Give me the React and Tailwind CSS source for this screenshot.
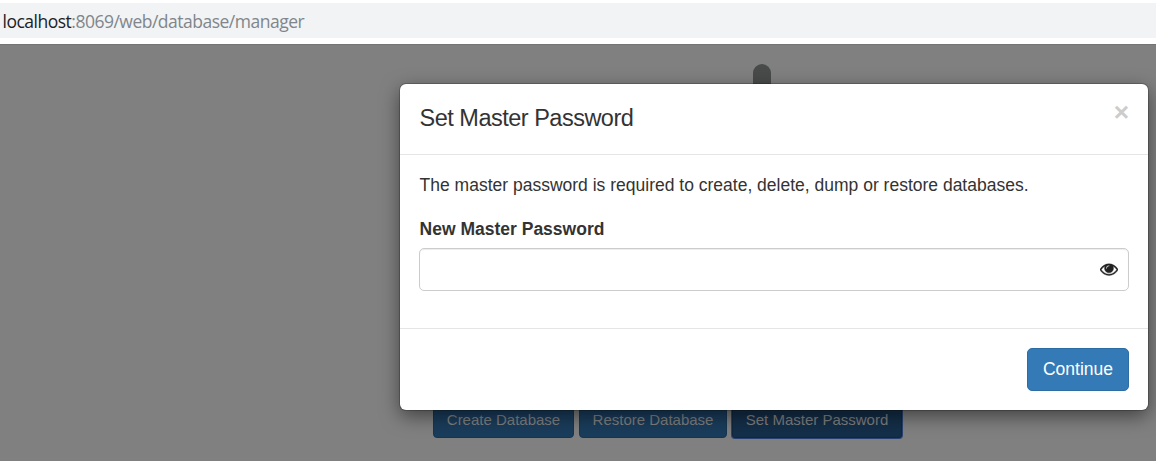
import React from "react";

function AddressBar() {
  return (
    <div className="h-[44px] bg-white pt-[3px]">
      <div className="flex h-[35px] items-center bg-[#f1f3f4] pt-[2px] pl-[2.5px] font-['Open_Sans',sans-serif] text-[17.5px] tracking-[-0.5px] text-[#80868b]">
        <span className="text-[#202124]">localhost</span>
        <span>:8069/web/database/manager</span>
      </div>
    </div>
  );
}

function EyeIcon() {
  return (
    <svg viewBox="0 0 1792 1792" className="h-[18px] w-[18px]" fill="#222" stroke="#222" strokeWidth="40">
      <path d="M1664 960q-152-236-381-353 61 104 61 225 0 185-131.5 316.5t-316.5 131.5-316.5-131.5-131.5-316.5q0-121 61-225-229 117-381 353 133 205 333.5 326.5t434.5 121.5 434.5-121.5 333.5-326.5zm-720-384q0-20-14-34t-34-14q-125 0-214.5 89.5t-89.5 214.5q0 20 14 34t34 14 34-14 14-34q0-86 61-147t147-61q20 0 34-14t14-34zm848 384q0 34-20 69-140 230-376.5 368.5t-499.5 138.5-499.5-139-376.5-368q-20-35-20-69t20-69q140-229 376.5-368t499.5-139 499.5 139 376.5 368q20 35 20 69z" />
    </svg>
  );
}

function Modal() {
  return (
    <div className="absolute top-[84px] left-[400px] flex h-[326px] w-[748px] flex-col rounded-[6px] bg-white text-[#333] shadow-[0_0_0_1px_rgba(0,0,0,0.2),0_6px_19px_rgba(0,0,0,0.5)]">
      <div className="flex h-[71px] justify-between border-b border-[#e5e5e5] pr-[19px] pl-[19.5px]">
        <h4 className="pt-[18px] text-[23.5px] leading-[32px] tracking-[-0.5px]">Set Master Password</h4>
        <button className="h-[26px] pt-[15px] text-[26.25px] leading-[26px] font-bold text-[#ccc]">×</button>
      </div>
      <div className="flex h-[173px] flex-col px-[19px] pt-[18px]">
        <p className="pl-[0.6px] text-[17.5px] leading-[25px]">
          The master password is required to create, delete, dump or restore databases.
        </p>
        <label className="mt-[19px] pl-[0.6px] text-[17.5px] leading-[25px] font-bold">New Master Password</label>
        <div className="mt-[6px] flex h-[43px] items-center rounded-[5px] border border-[#ccc] shadow-[inset_0_1px_1px_rgba(0,0,0,0.075)]">
          <input type="password" className="min-w-0 flex-1 bg-transparent px-[15px] outline-none" />
          <button className="mr-[10px] pb-[2px]">
            <EyeIcon />
          </button>
        </div>
      </div>
      <div className="flex flex-1 justify-end border-t border-[#e5e5e5] pt-[19px] pr-[19px]">
        <button className="h-[43px] w-[102px] rounded-[5px] border border-[#2e6da4] bg-[#337ab7] text-[17.5px] leading-[25px] text-white">
          Continue
        </button>
      </div>
    </div>
  );
}

export default function App() {
  return (
    <div className="relative flex h-[461px] w-[1156px] flex-col overflow-hidden bg-[#808080] font-['Liberation_Sans',sans-serif]">
      <AddressBar />
      <main className="flex flex-1 flex-col border-t border-[#747474]">
        <div className="mt-[19px] ml-[753px] h-[40px] w-[18px] rounded-t-[9px] bg-[#484b4a]" />
        <div className="mt-[298px] ml-[433px] flex h-[36px] gap-[5px] text-[15px] text-[#808080]">
          <button className="w-[141px] rounded-[4px] border border-[#173652] bg-[#1a3d5c]">Create Database</button>
          <button className="w-[148px] rounded-[4px] border border-[#173652] bg-[#1a3d5c]">Restore Database</button>
          <button className="w-[170px] rounded-[3px] border border-[#102740] bg-[#142f49] shadow-[0_0_0_1px_#2b4372]">
            Set Master Password
          </button>
        </div>
      </main>
      <Modal />
    </div>
  );
}
